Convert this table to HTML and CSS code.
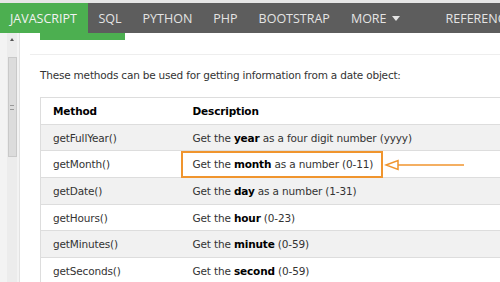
FILE: index.html
```html
<!DOCTYPE html>
<html>
<head>
<meta charset="utf-8">
<link rel="stylesheet" href="styles.css">
</head>
<body>
<div class="topstrip"></div>
<nav class="nav">
  <a class="tab active">JAVASCRIPT</a>
  <a class="tab">SQL</a>
  <a class="tab">PYTHON</a>
  <a class="tab">PHP</a>
  <a class="tab">BOOTSTRAP</a>
  <a class="tab">MORE <span class="caret"></span></a>
  <a class="tab tab-last">REFERENC</a>
</nav>
<div class="page">
  <aside class="side">
    <div class="track">
      <div class="uparrow"></div>
      <div class="thumb"><span class="grip"></span></div>
    </div>
  </aside>
  <main class="main">
    <div class="greenbar"></div>
    <hr class="rule">
    <p class="intro">These methods can be used for getting information from a date object:</p>
    <table class="ref">
      <tr class="head"><th class="c1">Method</th><th>Description</th></tr>
      <tr class="odd"><td class="c1">getFullYear()</td><td>Get the <b>year</b> as a four digit number (yyyy)</td></tr>
      <tr><td class="c1">getMonth()</td><td class="hl-cell"><span class="hl">Get the <b>month</b> as a number (0-11)</span><svg class="arrow" width="90" height="14" viewBox="0 0 90 14"><line x1="14" y1="7" x2="80" y2="7" stroke="#f0952e" stroke-width="1.5"/><polygon points="2,7 14,2.5 14,11.5" fill="none" stroke="#f0952e" stroke-width="1.5"/></svg></td></tr>
      <tr class="odd"><td class="c1">getDate()</td><td>Get the <b>day</b> as a number (1-31)</td></tr>
      <tr><td class="c1">getHours()</td><td>Get the <b>hour</b> (0-23)</td></tr>
      <tr class="odd"><td class="c1">getMinutes()</td><td>Get the <b>minute</b> (0-59)</td></tr>
      <tr><td class="c1">getSeconds()</td><td>Get the <b>second</b> (0-59)</td></tr>
    </table>
  </main>
</div>
</body>
</html>
```
FILE: styles.css
```css
html, body {
  margin: 0;
  padding: 0;
  width: 500px;
  height: 282px;
  overflow: hidden;
  background: #fff;
}
body {
  font-family: "DejaVu Sans", Verdana, sans-serif;
  color: #333;
}
.topstrip {
  height: 3px;
  background: #e6e6e6;
}
.nav {
  display: flex;
  height: 30px;
  background: #5d5d5d;
  white-space: nowrap;
  overflow: hidden;
}
.tab {
  flex: none;
  display: flex;
  align-items: center;
  padding: 0 10.5px;
  font-family: "Open Sans", sans-serif;
  font-size: 12.5px;
  color: #e4e4e4;
}
.tab.active {
  background: #4caf50;
  color: #f2f2f2;
  padding: 0 11px 0 10px;
}
.tab.tab-last {
  margin-left: 25px;
}
.caret {
  display: inline-block;
  width: 0;
  height: 0;
  margin-left: 5px;
  border-left: 4px solid transparent;
  border-right: 4px solid transparent;
  border-top: 5px solid #e4e4e4;
}
.page {
  display: flex;
  height: 249px;
}
.side {
  width: 19px;
  flex: none;
  background: #f3f3f3;
  border-right: 1px solid #e2e2e2;
  display: flex;
  justify-content: flex-end;
}
.track {
  width: 10px;
  margin-right: 2px;
  background: #ececec;
  display: flex;
  flex-direction: column;
  align-items: center;
}
.uparrow {
  margin-top: 5px;
  width: 0;
  height: 0;
  border-left: 2px solid transparent;
  border-right: 2px solid transparent;
  border-bottom: 3px solid #555;
}
.thumb {
  margin-top: 16px;
  width: 9px;
  height: 100px;
  background: #dcdcdc;
  border: 1px solid #c9c9c9;
  box-sizing: border-box;
  display: flex;
  align-items: center;
  justify-content: center;
}
.grip {
  width: 4px;
  height: 3px;
  border-top: 1px solid #999;
  border-bottom: 1px solid #999;
}
.main {
  flex: 1;
  min-width: 0;
}
.greenbar {
  margin-left: 20px;
  width: 85px;
  height: 7px;
  background: #4caf50;
}
.rule {
  margin: 14px 0 0 10px;
  border: 0;
  border-top: 1px solid #eeeeee;
  height: 0;
}
.intro {
  margin: 14px 0 0 20px;
  font-size: 10.5px;
  letter-spacing: -0.2px;
  line-height: 12px;
  color: #333;
}
.ref {
  margin: 16px 0 0 20px;
  width: 520px;
  border-collapse: collapse;
  border: 1px solid #dddddd;
  font-size: 10.5px;
  letter-spacing: -0.15px;
}
.ref th, .ref td {
  text-align: left;
  height: 26.7px;
  padding: 0 0 0 12px;
  border-bottom: 1px solid #dddddd;
  color: #333;
  box-sizing: border-box;
  white-space: nowrap;
}
.ref th {
  color: #000;
  font-weight: bold;
}
.ref b {
  color: #000;
}
.ref .c1 {
  width: 140px;
}
.odd td {
  background: #f1f1f1;
}
.hl-cell {
  position: relative;
}
.hl {
  position: absolute;
  left: 0;
  top: 0;
  height: 27px;
  line-height: 23px;
  padding: 0 8px 0 10px;
  border: 2px solid #f0952e;
  box-sizing: border-box;
  white-space: nowrap;
}
.arrow {
  position: absolute;
  left: 203px;
  top: 7px;
}
```
